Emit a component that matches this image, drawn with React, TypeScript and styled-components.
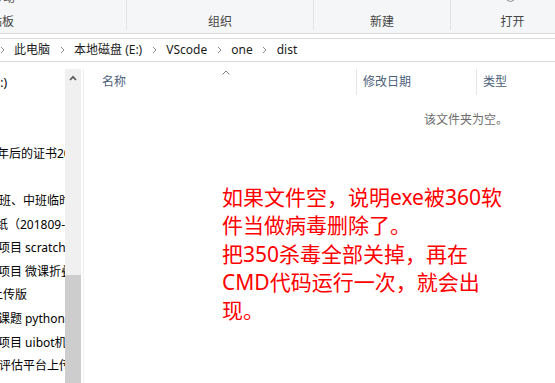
import React from "react";
import styled, { createGlobalStyle } from "styled-components";

const FONT = `"Noto Sans", "Noto Sans CJK SC", sans-serif`;

const GlobalStyle = createGlobalStyle`
  html, body {
    margin: 0;
    padding: 0;
    background: #fff;
    overflow: hidden;
  }
  body {
    font-family: ${FONT};
  }
`;

const Screen = styled.div`
  width: 555px;
  height: 383px;
  overflow: hidden;
  background: #fff;
`;

// the explorer window is wider than the capture, it runs off to the right
const ExplorerWindow = styled.div`
  width: 840px;
  height: 383px;
  display: flex;
  flex-direction: column;
`;

const Ribbon = styled.div`
  display: flex;
  flex-direction: row;
  height: 34px;
  box-sizing: border-box;
  margin-left: -134px;
  background: #f5f6f7;
  border-bottom: 1px solid #dadbdc;
  overflow: hidden;
`;

const RibbonGroup = styled.div<{ $width: number }>`
  width: ${(p) => p.$width}px;
  height: 30px;
  box-sizing: border-box;
  flex-shrink: 0;
  display: flex;
  flex-direction: column;
  align-items: center;
  border-right: 1px solid #e2e3e4;
`;

const RibbonLabel = styled.span`
  margin-top: auto;
  font-size: 12px;
  line-height: 16px;
  color: #444;
  white-space: nowrap;
`;

const RibbonTopText = styled.span<{ $offset: number }>`
  align-self: flex-start;
  margin-left: ${(p) => p.$offset}px;
  margin-top: -9px;
  font-size: 12px;
  line-height: 14px;
  color: #555;
  white-space: nowrap;
`;

const RibbonIconStub = styled.span`
  width: 9px;
  height: 9px;
  margin-top: -7px;
  margin-right: 4px;
  box-sizing: border-box;
  border: 1.5px solid #8a8a8a;
  border-radius: 50%;
`;

const AddressBar = styled.div`
  margin-top: 4px;
  height: 24px;
  box-sizing: border-box;
  border-top: 1px solid #d9d9d9;
  border-bottom: 1px solid #d9d9d9;
  display: flex;
  flex-direction: row;
  align-items: center;
`;

const Crumbs = styled.div`
  display: flex;
  flex-direction: row;
  align-items: center;
  margin-left: -10px;
`;

const CrumbSep = styled.span`
  width: 24px;
  display: flex;
  justify-content: center;
  align-items: center;
`;

const CrumbText = styled.span`
  font-size: 12px;
  line-height: 22px;
  color: #1a1a1a;
  white-space: nowrap;
`;

const Main = styled.div`
  flex: 1;
  display: flex;
  flex-direction: row;
  padding-top: 7px;
  min-height: 0;
`;

const NavPane = styled.div`
  width: 65px;
  flex-shrink: 0;
  overflow: hidden;
  padding-top: 2px;
`;

const NavRow = styled.div<{ $shift: number }>`
  height: 23.6px;
  line-height: 23.6px;
  font-size: 12px;
  color: #000;
  white-space: nowrap;
  text-indent: ${(p) => p.$shift}px;
`;

const ScrollBar = styled.div`
  width: 16px;
  flex-shrink: 0;
  background: #f0f0f0;
  display: flex;
  flex-direction: column;
`;

const ScrollArrow = styled.div`
  height: 17px;
  display: flex;
  justify-content: center;
  align-items: center;
`;

const ScrollThumb = styled.div`
  flex: 1;
  margin-top: 189px;
  background: #cdcdcd;
`;

const ContentPane = styled.div`
  width: 750px;
  flex-shrink: 0;
  margin-left: 2px;
  border-left: 1px solid #f0f0f0;
  display: flex;
  flex-direction: column;
`;

const HeaderRow = styled.div`
  display: flex;
  flex-direction: row;
  height: 26px;
`;

const HeaderCell = styled.div<{ $width: number; $pad: number; $divider?: boolean }>`
  position: relative;
  width: ${(p) => p.$width}px;
  box-sizing: border-box;
  padding-left: ${(p) => p.$pad}px;
  border-left: ${(p) => (p.$divider ? "1px solid #e5e5e5" : "none")};
  font-size: 12px;
  line-height: 26px;
  color: #4c607a;
  white-space: nowrap;
`;

const SortArrow = styled.span`
  position: absolute;
  top: 1px;
  left: 138px;
  display: flex;
`;

const EmptyNote = styled.div`
  margin-top: 17px;
  padding-left: 14px;
  text-align: center;
  font-size: 12px;
  line-height: 16px;
  color: #6d6d6d;
`;

const Annotation = styled.p`
  margin: 55px 0 0 138px;
  font-size: 21px;
  line-height: 28.3px;
  color: #ff0000;
  white-space: nowrap;
`;

const Chevron = () => (
  <svg width="5" height="8" viewBox="0 0 5 8">
    <polyline points="1,1 4,4 1,7" fill="none" stroke="#8a8a8a" strokeWidth="1" />
  </svg>
);

const crumbs = ["此电脑", "本地磁盘 (E:)", "VScode", "one", "dist"];

const navRows: { text: string; shift: number }[] = [
  { text: "(E:)", shift: -10 },
  { text: "", shift: 0 },
  { text: "", shift: 0 },
  { text: "年后的证书2019", shift: -3 },
  { text: "", shift: 0 },
  { text: "大班、中班临时安排", shift: -13 },
  { text: "试卷纸（201809-2019）", shift: -28 },
  { text: "课题项目 scratch项目", shift: -26 },
  { text: "课题项目 微课折叠", shift: -26 },
  { text: "上传版", shift: -9 },
  { text: "专题课题 python", shift: -26 },
  { text: "课题项目 uibot机器人", shift: -26 },
  { text: "评估平台上传", shift: -1 },
];

const App = () => {
  return (
    <>
      <GlobalStyle />
      <Screen>
        <ExplorerWindow>
          <Ribbon>
            <RibbonGroup $width={261}>
              <RibbonTopText $offset={125}>移动</RibbonTopText>
              <RibbonLabel>剪贴板</RibbonLabel>
            </RibbonGroup>
            <RibbonGroup $width={187}>
              <RibbonLabel>组织</RibbonLabel>
            </RibbonGroup>
            <RibbonGroup $width={137}>
              <RibbonLabel>新建</RibbonLabel>
            </RibbonGroup>
            <RibbonGroup $width={124}>
              <RibbonIconStub />
              <RibbonLabel>打开</RibbonLabel>
            </RibbonGroup>
          </Ribbon>

          <AddressBar>
            <Crumbs>
              {crumbs.map((c) => (
                <React.Fragment key={c}>
                  <CrumbSep>
                    <Chevron />
                  </CrumbSep>
                  <CrumbText>{c}</CrumbText>
                </React.Fragment>
              ))}
            </Crumbs>
          </AddressBar>

          <Main>
            <NavPane>
              {navRows.map((r, i) => (
                <NavRow key={i} $shift={r.shift}>
                  {r.text || "\u00a0"}
                </NavRow>
              ))}
            </NavPane>
            <ScrollBar>
              <ScrollArrow>
                <svg width="8" height="6" viewBox="0 0 8 6">
                  <polyline
                    points="1,5 4,1.8 7,5"
                    fill="none"
                    stroke="#606060"
                    strokeWidth="1.8"
                  />
                </svg>
              </ScrollArrow>
              <ScrollThumb />
            </ScrollBar>
            <ContentPane>
              <HeaderRow>
                <HeaderCell $width={272} $pad={18}>
                  名称
                  <SortArrow>
                    <svg width="8" height="5" viewBox="0 0 8 5">
                      <polyline
                        points="0.5,4.5 4,1 7.5,4.5"
                        fill="none"
                        stroke="#7a7a7a"
                        strokeWidth="1"
                      />
                    </svg>
                  </SortArrow>
                </HeaderCell>
                <HeaderCell $width={120} $pad={6} $divider>
                  修改日期
                </HeaderCell>
                <HeaderCell $width={150} $pad={6} $divider>
                  类型
                </HeaderCell>
              </HeaderRow>
              <EmptyNote>该文件夹为空。</EmptyNote>
              <Annotation>
                如果文件空，说明exe被360软
                <br />
                件当做病毒删除了。
                <br />
                把350杀毒全部关掉，再在
                <br />
                CMD代码运行一次，就会出
                <br />
                现。
              </Annotation>
            </ContentPane>
          </Main>
        </ExplorerWindow>
      </Screen>
    </>
  );
};

export default App;
